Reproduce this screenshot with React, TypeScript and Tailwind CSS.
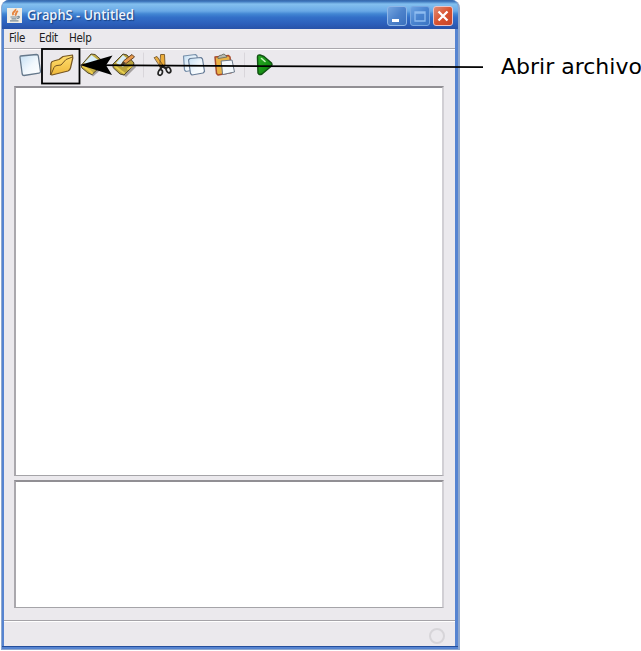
import React from "react";

function JavaIcon() {
  return (
    <svg width="15" height="15" viewBox="0 0 15 15" className="block">
      <rect width="15" height="15" fill="#efece4" />
      <path d="M8.500 1C9.500 3 4 4.500 6.500 7M11 3C8 4.500 10 6 8 7.500" fill="none" stroke="#e5853f" strokeWidth="1.900" />
      <path d="M3.500 9h7M4.500 10.800h5M3 12.900h8.500M10.500 8.500c3-.5 2 2-.5 2" fill="none" stroke="#7b8c98" strokeWidth="1.200" />
    </svg>
  );
}

function TitleButton({ kind }: { kind: "min" | "max" | "close" }) {
  const tone =
    kind === "close"
      ? "border-[#e9c4c8] bg-linear-to-br from-[#e08a72] via-[#d9532f] to-[#c8452a]"
      : kind === "min"
        ? "border-[#8fb6e6] bg-linear-to-br from-[#76a6df] via-[#4d82cb] to-[#3a70bd]"
        : "border-[#79a7e0] bg-linear-to-br from-[#6da3e1] via-[#4983cf] to-[#3c75c3]";
  return (
    <div className={`h-5 w-5 rounded-[3px] border ${tone}`}>
      <svg width="18" height="18" viewBox="0 0 18 18" className="block">
        {kind === "min" && <rect x="4" y="12" width="7" height="3" fill="#fff" />}
        {kind === "max" && <path d="M4 5h10v9H4zM4 6h10" fill="none" stroke="#8ebcf0" strokeWidth="1.300" />}
        {kind === "close" && <path d="M4.500 4.500l9 9M13.500 4.500l-9 9" stroke="#fff" strokeWidth="2.300" />}
      </svg>
    </div>
  );
}

function ToolbarIcons() {
  return (
    <svg width="451" height="36" viewBox="4 50 451 36" className="block">
      <defs>
        <linearGradient id="paper" x1="0" y1="0" x2="1" y2="1">
          <stop offset="0" stopColor="#c3def3" />
          <stop offset=".55" stopColor="#f2f8fd" />
          <stop offset="1" stopColor="#fff" />
        </linearGradient>
        <linearGradient id="folder" x1="0" y1="0" x2="0" y2="1">
          <stop offset="0" stopColor="#ffdf70" />
          <stop offset="1" stopColor="#efb83a" />
        </linearGradient>
        <linearGradient id="run" x1="0" y1="0" x2="1" y2="1">
          <stop offset="0" stopColor="#2bb025" />
          <stop offset="1" stopColor="#087d09" />
        </linearGradient>
      </defs>
      <g strokeLinejoin="round" strokeLinecap="round">
        <path d="M20.500 56L36.500 54.500Q38 54.500 38.300 56L40.500 71.500Q40.500 73 39 73.200L24 75.500Q22.500 75.500 22.200 74L20 57.500Q20 56 20.500 56Z" fill="url(#paper)" stroke="#65788b" strokeWidth="1.300" />
        <path d="M50.500 74.500L51 63.500Q51.200 61.500 53.500 61L59 59.500L63 56.500L72.500 55L72.800 58L70.500 68Q70 70 68 71L52 75Z" fill="url(#folder)" stroke="#755522" strokeWidth="1.200" />
        <path d="M51 74.500L54 67.500Q55 65.500 57 65.500L61 65L66 59.500L72.500 57" fill="none" stroke="#755522" strokeWidth="1" />

        <path d="M84 69L93 76.500L104 67L103 62Z" fill="#74706a" opacity=".6" />
        <path d="M81.500 65L91 54L95 54.500L102.500 61L102 65L92 74.500L88 73L82 68Z" fill="#c3ad43" stroke="#54492b" />
        <path d="M84 63L91.500 55L98 60L91 67Z" fill="#d7edf8" />
        <path d="M83 66L90 71L92 73" fill="none" stroke="#f0ce49" strokeWidth="2" />

        <path d="M116 70L126 77L136 67L133 62Z" fill="#74706a" opacity=".6" />
        <path d="M113 64L123 54L127 55L134 63L133 66L124 75L120 74L113.500 68Z" fill="#b7a13c" stroke="#51482d" />
        <path d="M116 63L123 55L129 60L123 67Z" fill="#d8edf7" />
        <path d="M115 66L121 71L124 73M128 69L132 66" fill="none" stroke="#e8cf4c" strokeWidth="2" />
        <path d="M121 65L124 60.500L132 54.500L134.500 57L126 63.500Z" fill="#e79a4d" stroke="#654225" />
        <path d="M120.500 66L123 61.500L126 63Z" fill="#4f412b" />

        <path d="M143.500 53v24M244.500 53v24" stroke="#d9d6db" />

        <path d="M154.500 57.500L157 56.500L163.500 66L161 67.500ZM161 54.500L164.500 54.500L165 65L160 67Z" fill="#edae3c" stroke="#765626" strokeWidth=".9" />
        <path d="M162 66l5 3M162 66l-2 4" stroke="#242424" strokeWidth="2.200" />
        <ellipse cx="160.300" cy="72.500" rx="2.100" ry="2.900" transform="rotate(15 160.300 72.500)" fill="#eeeef0" stroke="#242424" strokeWidth="1.700" />
        <ellipse cx="168.500" cy="70" rx="2.100" ry="2.900" transform="rotate(-25 168.500 70)" fill="#eeeef0" stroke="#242424" strokeWidth="1.700" />

        <path d="M183.500 56L195.500 54.500L197 56L198.500 69L186 71.500L184.500 70Z" fill="url(#paper)" stroke="#7890aa" strokeWidth="1.200" />
        <path d="M188.500 60L190 58.500L201 57.500L202.500 59L204.500 71.500L203 73L192 75L190.500 73.500Z" fill="url(#paper)" stroke="#687d98" strokeWidth="1.200" />

        <path d="M215 57L228.500 55.500L230 57L231.500 72.500L218 75L216.500 73.500Z" fill="#e8b246" stroke="#a84b2d" strokeWidth="1.500" />
        <path d="M218 57.500L219.500 55.500L222 55L223 54L225 54.500L227 57L218.500 58.500Z" fill="#b5b9ae" stroke="#62665d" strokeWidth=".8" />
        <path d="M221.500 61L232 60L234.500 72L223 74.500Z" fill="#f3f8fc" stroke="#6e7b8b" strokeWidth="1" />

        <path d="M257.500 57Q257.500 54.500 260 55L264 56.500L271.500 63Q272.500 64.500 271.500 66L262 74Q259 75.500 258 73Z" fill="url(#run)" stroke="#125214" strokeWidth="1.500" />
        <path d="M261.500 58.500l3.500 3" stroke="#c7f3bc" strokeWidth="1.600" />
      </g>
    </svg>
  );
}

function TextPane({ className }: { className: string }) {
  return (
    <div className={`w-[430px] border-t-2 border-r-2 border-b border-l-2 border-t-[#918f94] border-r-[#d1cfd4] border-b-[#a5a4a8] border-l-[#aaa8ad] bg-white ${className}`} />
  );
}

function Callout() {
  return (
    <svg width="641" height="100" viewBox="0 0 641 100" className="pointer-events-none absolute left-0 top-0">
      <rect x="42" y="49" width="37.500" height="34.500" fill="none" stroke="#000" strokeWidth="1.800" />
      <path d="M90 65.200L483 67.200" stroke="#000" strokeWidth="1.800" />
      <path d="M80 65L112.500 55.500L106 65.200L112 75Z" fill="#000" />
    </svg>
  );
}

export default function App() {
  return (
    <div className="relative flex h-[651px] w-[641px] overflow-hidden bg-white">
      <div className="ml-px flex h-[650px] w-[459px] shrink-0 flex-col overflow-hidden rounded-t-[8px] border-r-2 border-b border-l border-[#8fa8ce] bg-[#5684d1]">
        <header className="flex h-[29px] shrink-0 items-center justify-between bg-[linear-gradient(to_bottom,#3566aa_0%,#3f78bd_5%,#83c0ef_14%,#6aa9e6_38%,#4286d3_48%,#336fc8_60%,#2c5fbb_82%,#2852a8_100%)] pl-[5px] pr-[5px]">
          <div className="flex items-center gap-[5px] pt-px">
            <JavaIcon />
            <svg width="112" height="22" className="block overflow-visible">
              <text x="0" y="16" textLength="107" lengthAdjust="spacingAndGlyphs" fill="#eef4fc" fontSize="13.500" fontWeight="600" className="font-['Open_Sans',sans-serif] [text-shadow:1px_1px_1px_#173f80]">GraphS - Untitled</text>
            </svg>
          </div>
          <div className="flex gap-[3px] pt-[2px]">
            <TitleButton kind="min" />
            <TitleButton kind="max" />
            <TitleButton kind="close" />
          </div>
        </header>
        <main className="ml-[2px] flex h-[617px] w-[451px] shrink-0 flex-col bg-[#ebe9ed]">
          <nav className="flex h-[20px] shrink-0 items-center border-b border-[#aaa8ad] pl-[5px] font-['DejaVu_Sans_Condensed','DejaVu_Sans',sans-serif] text-[11.500px] leading-none tracking-[-0.300px] text-[#201b20]">
            <span className="w-[30px]">File</span>
            <span className="w-[30px]">Edit</span>
            <span>Help</span>
          </nav>
          <div className="h-[37px] shrink-0 border-t border-white">
            <ToolbarIcons />
          </div>
          <div className="flex shrink-0 flex-col gap-[4px] pl-[10px]">
            <TextPane className="h-[390px]" />
            <TextPane className="h-[128px]" />
          </div>
          <footer className="mt-[12px] flex flex-1 items-start justify-end border-t border-[#a5a3a8] pr-[10px] pt-[7px] shadow-[inset_0_1px_0_#fff]">
            <div className="h-[16px] w-[16px] rounded-full border-[2.500px] border-[#d7d5d9]" />
          </footer>
        </main>
        <div className="h-[3px] shrink-0 border-t border-[#244f9c] bg-[#5684d1]" />
      </div>
      <div className="ml-[41px] mt-[53px] whitespace-nowrap font-['DejaVu_Sans',sans-serif] text-[22px] leading-[28px] text-black">Abrir archivo</div>
      <Callout />
    </div>
  );
}
